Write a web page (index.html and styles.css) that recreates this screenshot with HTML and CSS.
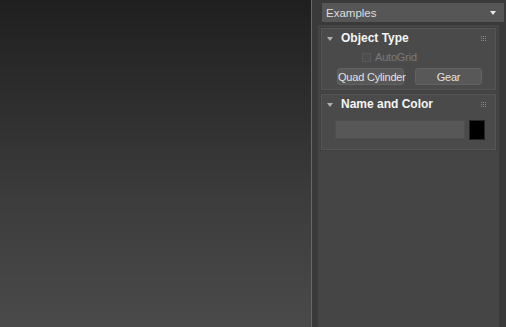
FILE: index.html
```html
<!DOCTYPE html>
<html lang="en">
<head>
  <meta charset="UTF-8">
  <title>Command Panel</title>
  <link rel="stylesheet" href="styles.css">
</head>
<body>
  <div class="app">
    <div class="viewport"></div>
    <div class="side">
      <div class="top">
        <div class="dropdown">
          <span>Examples</span>
          <span class="caret"></span>
        </div>
      </div>
      <div class="scroll">
        <div class="rollout">
          <div class="rollout-head">
            <span class="tri"></span>
            <span class="title">Object Type</span>
            <span class="grip"><i></i><i></i><i></i><i></i><i></i><i></i><i></i><i></i><i></i></span>
          </div>
          <div class="autogrid">
            <span class="check"></span>
            <span>AutoGrid</span>
          </div>
          <div class="buttons">
            <button class="btn">Quad Cylinder</button>
            <button class="btn">Gear</button>
          </div>
        </div>
        <div class="rollout">
          <div class="rollout-head">
            <span class="tri"></span>
            <span class="title">Name and Color</span>
            <span class="grip"><i></i><i></i><i></i><i></i><i></i><i></i><i></i><i></i><i></i></span>
          </div>
          <div class="name-row">
            <div class="name-input"></div>
            <div class="swatch"></div>
          </div>
        </div>
      </div>
    </div>
  </div>
</body>
</html>
```

FILE: styles.css
```css
html, body {
  margin: 0;
  height: 100%;
  background: #3b3b3b;
}
body {
  font-family: "Liberation Sans", Arial, sans-serif;
  font-size: 11px;
}
.app {
  display: flex;
  height: 327px;
}
.viewport {
  width: 311px;
  background: linear-gradient(to bottom, #1f1f1f 0px, #222 20px, #2f2f2f 110px, #3c3c3c 200px, #4a4a4a 327px);
  border-right: 1px solid #7d6a26;
}
.side {
  flex: 1;
  display: flex;
  flex-direction: column;
  background: #3a3a3a;
}
.top {
  padding: 3px 2px 3px 10px;
}
.dropdown {
  height: 19px;
  background: #565656;
  color: #dedede;
  display: flex;
  align-items: center;
  justify-content: space-between;
  padding: 0 8px 0 4px;
  font-size: 11.5px;
}
.caret {
  width: 0;
  height: 0;
  border-left: 3px solid transparent;
  border-right: 3px solid transparent;
  border-top: 4px solid #e8e8e8;
}
.scroll {
  flex: 1;
  margin: 0 7px 0 6px;
  background: #454545;
  padding: 3px 3px;
  display: flex;
  flex-direction: column;
  gap: 4px;
}
.rollout {
  background: #4a4a4a;
  border: 1px solid #555;
  box-shadow: 0 0 0 1px #404040;
}
.rollout-head {
  height: 18px;
  display: flex;
  align-items: center;
  padding: 0 9px 0 5px;
}
.tri {
  width: 0;
  height: 0;
  border-left: 3.5px solid transparent;
  border-right: 3.5px solid transparent;
  border-top: 4px solid #b0b0b0;
  margin-right: 8px;
  margin-top: 1px;
}
.title {
  flex: 1;
  color: #f4f4f4;
  font-weight: bold;
  font-size: 12px;
}
.grip {
  display: grid;
  grid-template-columns: repeat(3, 1px);
  gap: 1px;
}
.grip i {
  width: 1px;
  height: 1px;
  background: #8a8a8a;
}
.autogrid {
  display: flex;
  align-items: center;
  gap: 4px;
  color: #7a7a7a;
  height: 16px;
  margin-top: 2px;
  padding-left: 40px;
  letter-spacing: -0.2px;
}
.check {
  width: 7px;
  height: 7px;
  background: #4e4e4e;
  border: 1px solid #585858;
}
.buttons {
  display: flex;
  gap: 11px;
  padding: 3px 0 4px 15px;
}
.btn {
  flex: none;
  width: 67px;
  height: 17px;
  padding: 0;
  background: #585858;
  border: 1px solid #626262;
  border-radius: 3px;
  color: #e2e2e2;
  font-family: "Liberation Sans", Arial, sans-serif;
  font-size: 11px;
  letter-spacing: -0.2px;
  white-space: nowrap;
  overflow: visible;
}
.name-row {
  display: flex;
  gap: 4px;
  padding: 7px 0 9px 13px;
}
.name-input {
  width: 128px;
  height: 17px;
  background: #575757;
  border: 1px solid #4f4f4f;
}
.swatch {
  width: 14px;
  height: 18px;
  background: #000;
  border: 1px solid #262626;
}
```
